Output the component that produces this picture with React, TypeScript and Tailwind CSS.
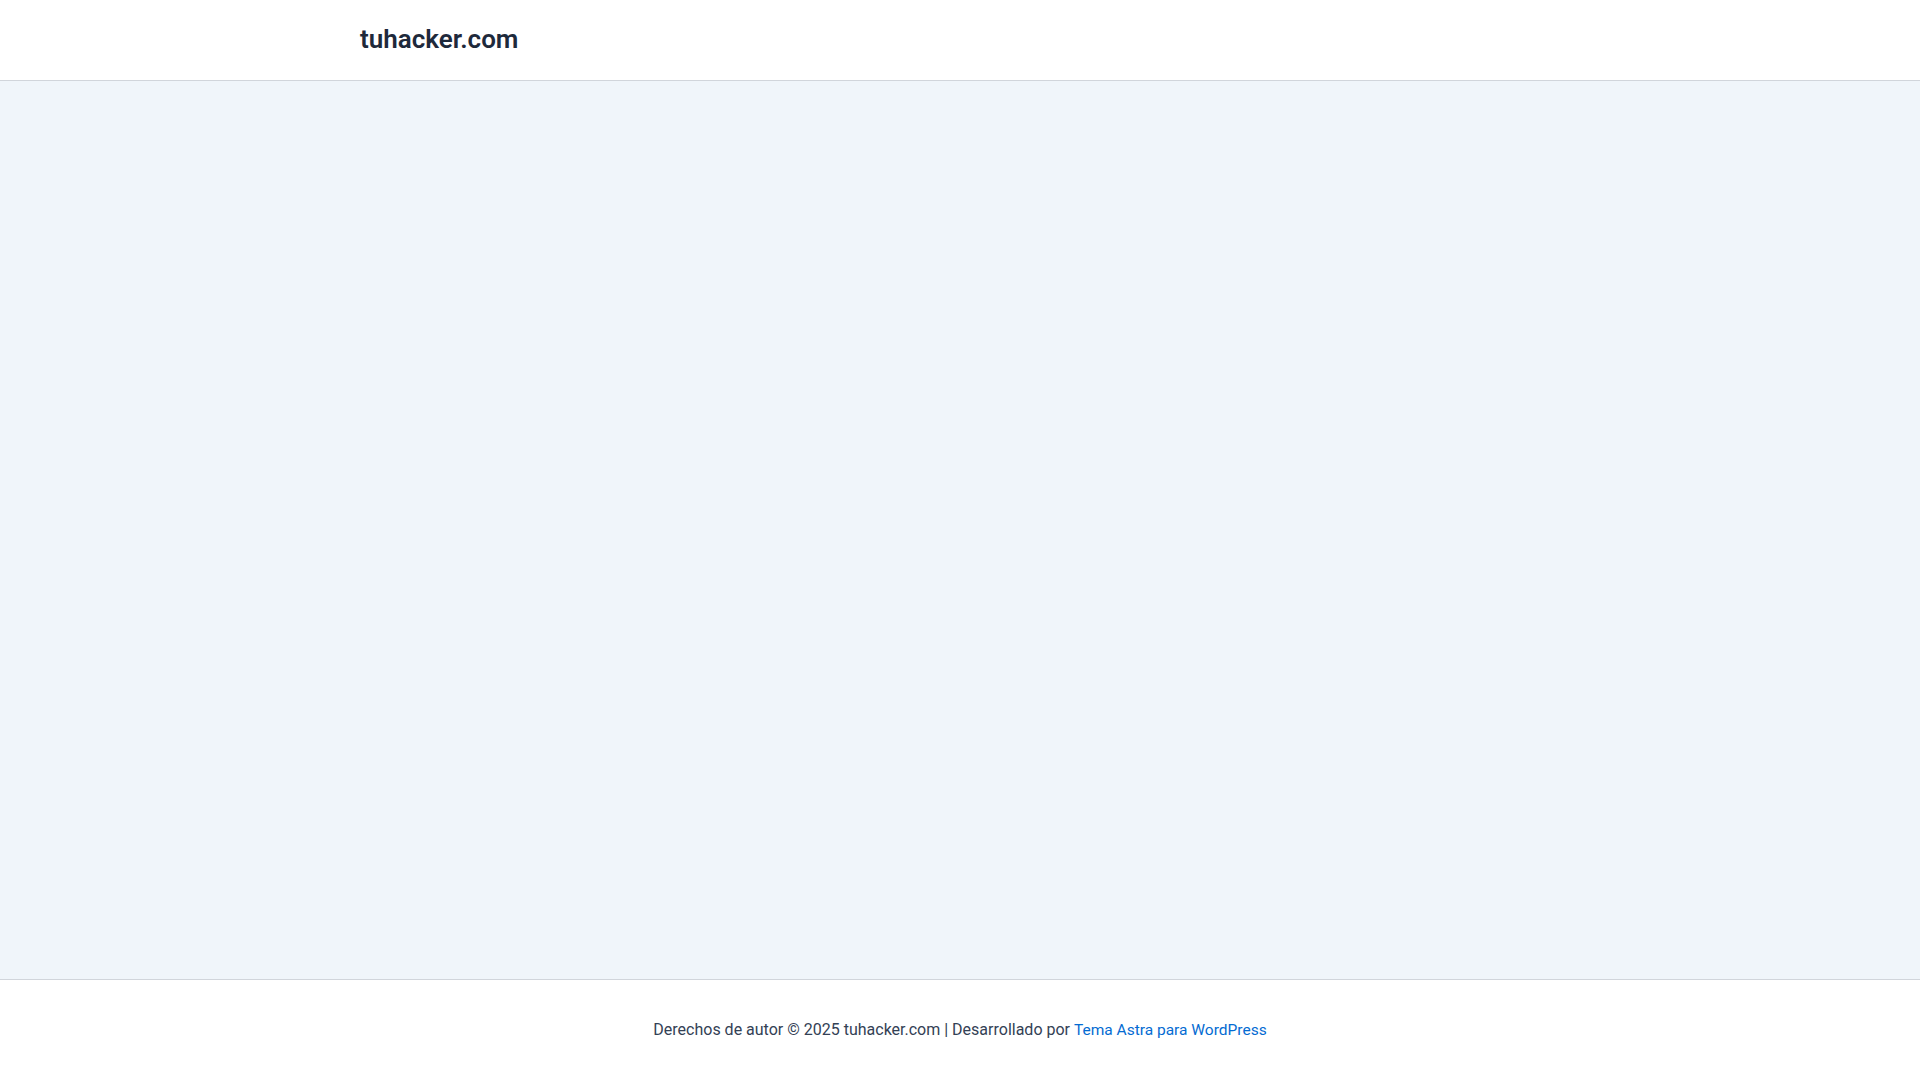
export default function App() {
  return (
    <div className="flex flex-col h-[1080px] w-full bg-white" style={{ fontFamily: "Roboto, 'Liberation Sans', sans-serif" }}>
      <header className="h-[81px] border-b border-[#d1d5db] bg-white flex items-center px-[360px] pb-[2px]">
        <a className="text-[26px] font-semibold text-[#1e293b] leading-none">tuhacker.com</a>
      </header>
      <main className="flex-1 bg-[#f0f5fa]" />
      <footer className="h-[101px] border-t border-[#d1d5db] bg-white flex items-center justify-center">
        <p className="text-[16px] text-[#334155]">
          Derechos de autor © 2025 tuhacker.com | Desarrollado por{" "}
          <a className="text-[15.5px] text-[#046bd2]">Tema Astra para WordPress</a>
        </p>
      </footer>
    </div>
  );
}
